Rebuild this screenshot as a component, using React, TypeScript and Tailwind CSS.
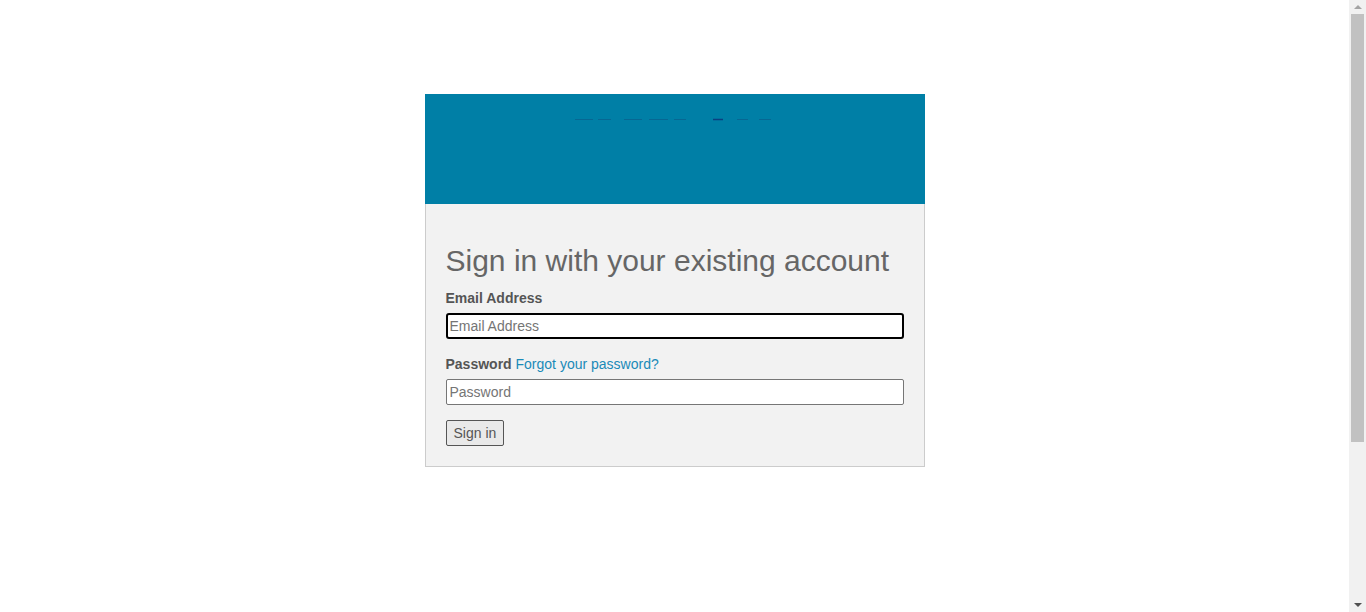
export default function App() {
  const marks = [
    [575, 593], [598, 611], [624, 642], [649, 668], [674, 686], [737, 748], [759, 771],
  ]

  return (
    <div className="flex h-screen overflow-hidden bg-white font-['Liberation_Sans',Arial,sans-serif]">
      <main className="flex-1 overflow-hidden pt-[94px]">
        <div className="mx-auto w-[500px]">
          <div className="h-[110px] bg-[#007fa6]">
            {/* clipped logo strip */}
            <svg width="500" height="30" className="block">
              {marks.map(([a, b]) => (
                <line key={a} x1={a - 425} x2={b - 425} y1="25.5" y2="25.5" stroke="#0a5c8c" strokeOpacity="0.7" strokeWidth="1" />
              ))}
              <line x1={713 - 425} x2={723 - 425} y1="25.5" y2="25.5" stroke="#0b3f80" strokeWidth="1.5" />
            </svg>
          </div>
          <div className="border border-t-0 border-[#cccccc] bg-[#f2f2f2] px-5 pt-[38px] pb-5">
            <h1 className="mb-[10px] text-[30px] leading-[38px] whitespace-nowrap text-[#666666]">Sign in with your existing account</h1>
            <form className="flex flex-col" onSubmit={(e) => e.preventDefault()}>
              <label htmlFor="email" className="text-[14px] leading-[16px] font-bold text-[#555555]">Email Address</label>
              <input
                id="email"
                type="email"
                placeholder="Email Address"
                autoFocus
                className="mt-[7px] h-[26px] w-[458px] rounded-[3px] border-2 border-black bg-white px-[2px] text-[14px] text-[#333] outline-none placeholder:text-[#757575]"
              />
              <div className="mt-[17px] text-[14px] leading-[16px]">
                <span className="font-bold text-[#555555]">Password</span>{' '}
                <a href="#" className="text-[#1a8ab8]">Forgot your password?</a>
              </div>
              <input
                type="password"
                placeholder="Password"
                className="mt-[7px] h-[26px] w-[458px] rounded-[2px] border border-[#767676] bg-white px-[3px] text-[14px] text-[#333] outline-none placeholder:text-[#757575]"
              />
              <div className="mt-[15px]">
                <button className="h-[26px] rounded-[2px] border border-[#555555] bg-[#e9e9e9] px-[7px] text-[14px] text-[#555555]">
                  Sign in
                </button>
              </div>
            </form>
          </div>
        </div>
      </main>

      {/* page scrollbar */}
      <aside className="flex w-[17px] flex-col bg-[#f1f1f1]">
        <div className="flex h-[14px] items-center justify-center">
          <svg width="8" height="4" viewBox="0 0 8 4"><path d="M0 4 L4 0 L8 4 Z" fill="#a3a3a3" /></svg>
        </div>
        <div className="flex-1 px-[2px]">
          <div className="h-[428px] bg-[#c1c1c1]" />
        </div>
        <div className="flex h-[14px] items-center justify-center">
          <svg width="8" height="4" viewBox="0 0 8 4"><path d="M0 0 L8 0 L4 4 Z" fill="#505050" /></svg>
        </div>
      </aside>
    </div>
  )
}
